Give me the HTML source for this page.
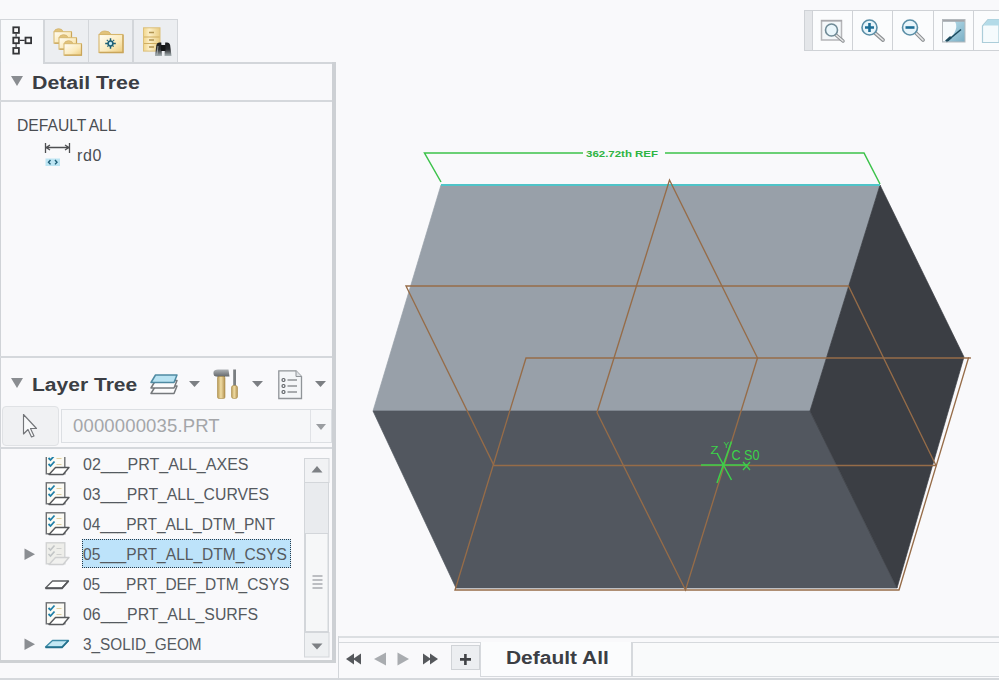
<!DOCTYPE html>
<html><head><meta charset="utf-8">
<style>
html,body{margin:0;padding:0;}
body{width:999px;height:680px;overflow:hidden;position:relative;background:#f9f9fb;font-family:"Liberation Sans",sans-serif;}
.a{position:absolute;}
.t{position:absolute;white-space:nowrap;line-height:1;}
.tab{position:absolute;top:19px;height:43px;background:#eceef1;border:1px solid #d3d6da;border-bottom:none;box-sizing:border-box;}
.hdr{font-weight:bold;color:#3b3e44;font-size:19px;}
.row{position:absolute;left:82.5px;transform-origin:0 0;font-size:16px;color:#555a60;white-space:nowrap;line-height:1;}
.arr{position:absolute;width:0;height:0;border-left:5.5px solid transparent;border-right:5.5px solid transparent;border-top:6px solid #8a8d91;}
</style></head><body>

<!-- ===== LEFT PANEL ===== -->
<!-- tabs -->
<div class="a" style="left:0;top:19px;width:44px;height:45px;background:#f8f9fb;border-top:1px solid #d3d6da;border-right:1px solid #d3d6da;border-left:1px solid #d3d6da;box-sizing:border-box;"></div>
<div class="tab" style="left:44px;width:45px;"></div>
<div class="tab" style="left:88px;width:45px;"></div>
<div class="tab" style="left:133px;width:45px;"></div>

<!-- panel frame -->
<div class="a" style="left:43px;top:62px;width:293px;height:2px;background:#d3d6da;"></div>
<div class="a" style="left:0;top:62px;width:1px;height:600px;background:#d0d3d7;"></div>
<div class="a" style="left:332px;top:62px;width:4px;height:600px;background:#cdd0d4;"></div>
<div class="a" style="left:0;top:660px;width:336px;height:3px;background:#ced1d4;"></div>
<div class="a" style="left:0;top:100px;width:332px;height:2px;background:#d5d8dc;"></div>
<div class="a" style="left:0;top:356px;width:332px;height:2px;background:#d5d8dc;"></div>
<div class="a" style="left:0;top:447px;width:332px;height:2px;background:#d5d8dc;"></div>
<div class="a" style="left:0;top:678px;width:338px;height:2px;background:#d5d8dc;"></div>

<!-- Detail tree header -->
<div class="arr" style="left:11px;top:76px;border-left-width:6px;border-right-width:6px;border-top-width:10px;"></div>
<div class="t hdr" style="left:31.5px;top:74px;font-size:18.8px;transform:scaleX(1.135);transform-origin:0 0;">Detail Tree</div>
<div class="t" style="left:16.5px;top:116.8px;font-size:16.5px;color:#4a4d52;word-spacing:-1px;transform:scaleX(0.95);transform-origin:0 0;">DEFAULT ALL</div>
<div class="t" style="left:77px;top:147.5px;font-size:16px;color:#4a4d52;letter-spacing:0.6px;">rd0</div>

<!-- Layer tree header -->
<div class="arr" style="left:11px;top:378px;border-left-width:6px;border-right-width:6px;border-top-width:10px;"></div>
<div class="t hdr" style="left:31.5px;top:376.3px;font-size:18.8px;transform:scaleX(1.12);transform-origin:0 0;">Layer Tree</div>

<!-- combo row -->
<div class="a" style="left:2px;top:406px;width:57px;height:40px;background:#f0f1f3;border:1px solid #e0e2e5;border-radius:4px;box-sizing:border-box;"></div>
<div class="a" style="left:61px;top:409px;width:271px;height:34px;background:#f6f7f9;border:1px solid #dcdfe3;box-sizing:border-box;"></div>
<div class="a" style="left:310px;top:410px;width:1px;height:32px;background:#e0e2e6;"></div>
<div class="arr" style="left:316px;top:424px;border-top-color:#9a9da1;"></div>
<div class="t" style="left:73px;top:417px;font-size:18.5px;color:#a4a6a9;letter-spacing:0.15px;">0000000035.PRT</div>

<!-- list rows -->
<div class="a" style="left:82px;top:539px;width:209px;height:29px;background:#bde3fa;border:1px dotted #2a3a48;box-sizing:border-box;"></div>
<div class="row" style="top:457.0px;transform:scaleX(1.0022);">02___PRT_ALL_AXES</div>
<div class="row" style="top:487.0px;transform:scaleX(0.9849);">03___PRT_ALL_CURVES</div>
<div class="row" style="top:517.0px;transform:scaleX(0.9696);">04___PRT_ALL_DTM_PNT</div>
<div class="row" style="top:547.0px;transform:scaleX(0.9725);">05___PRT_ALL_DTM_CSYS</div>
<div class="row" style="top:577.0px;transform:scaleX(0.9682);">05___PRT_DEF_DTM_CSYS</div>
<div class="row" style="top:607.0px;transform:scaleX(0.9907);">06___PRT_ALL_SURFS</div>
<div class="row" style="top:637.0px;transform:scaleX(0.9601);">3_SOLID_GEOM</div>

<!-- scrollbar -->
<div class="a" style="left:304px;top:458px;width:25px;height:199px;background:#e9ebee;border:1px solid #d3d6da;box-sizing:border-box;"></div>

<!-- ===== LEFT ICONS ===== -->
<svg class="a" style="left:0;top:0" width="340" height="680" viewBox="0 0 340 680">
  <defs>
    <linearGradient id="fold" x1="0" y1="0" x2="1" y2="1">
      <stop offset="0" stop-color="#fffaf0"/><stop offset="1" stop-color="#f6dc9a"/>
    </linearGradient>
    <g id="chk">
      <rect x="0.8" y="0.8" width="18.5" height="21" fill="#fbfaf4" stroke="#6e7073" stroke-width="1.4"/>
      <path d="M3,6 L5,8 L9,3.5 M3,12 L5,14 L9,9.5" stroke="#1f7fa8" stroke-width="1.8" fill="none"/>
      <path d="M11,6.5 H16 M11,12.5 H16" stroke="#e0cfa0" stroke-width="1.2"/>
      <polygon points="10,15.5 23.5,15.5 17.5,22.5 3.5,22.5" fill="#ffffff" stroke="#56585b" stroke-width="1.4" stroke-linejoin="round"/>
    </g>
  </defs>
  <!-- tab1 tree -->
  <g stroke="#343538" stroke-width="1.8" fill="#fafafa">
    <rect x="13.3" y="27.3" width="5.6" height="5.6"/>
    <rect x="13.3" y="37.6" width="5.6" height="5.6"/>
    <rect x="13.3" y="48" width="5.6" height="5.6"/>
    <rect x="25.5" y="37.6" width="5.6" height="5.6"/>
    <path d="M16.1,33.8 V36.7 M16.1,44.1 V47.1 M19.8,40.4 H24.6" stroke-width="1.2"/>
  </g>
  <!-- tab2 folders -->
  <defs>
    <linearGradient id="fold2" x1="0" y1="0" x2="1" y2="1">
      <stop offset="0" stop-color="#fffdf6"/><stop offset="0.6" stop-color="#fbeabb"/><stop offset="1" stop-color="#eccb7c"/>
    </linearGradient>
    <g id="fld">
      <path d="M0.5,4 Q1,0.5 5,0.5 Q9,0.5 9.5,3.5 Z" fill="#e2c37c" stroke="#d2b16a" stroke-width="0.8"/>
      <rect x="0.5" y="3.5" width="17.5" height="11.5" fill="url(#fold2)" stroke="#d8b86e" stroke-width="1"/>
      <path d="M18,4 V15 H1" stroke="#c9a55a" stroke-width="1.2" fill="none"/>
    </g>
  </defs>
  <use href="#fld" x="53.5" y="28.2"/>
  <use href="#fld" x="58.5" y="34.2"/>
  <use href="#fld" x="63.5" y="40.2"/>
  <!-- tab3 folder w/ snowflake -->
  <path d="M99.5,35 Q100,31 105,31 Q110,31 111,34.5 Z" fill="#e2c37c" stroke="#d2b16a" stroke-width="0.8"/>
  <rect x="99" y="34.5" width="24" height="18" fill="url(#fold2)" stroke="#d6b66c" stroke-width="1.1"/>
  <path d="M123,35 V52.5 H99.5" stroke="#c9a55a" stroke-width="1.3" fill="none"/>
  <path d="M110.5,38.2 V48.8 M105.2,43.5 H115.8" stroke="#1d5f76" stroke-width="1.5"/>
  <path d="M106.8,39.8 L114.2,47.2 M114.2,39.8 L106.8,47.2" stroke="#2a6b80" stroke-width="1.2" stroke-dasharray="1.6 1.1"/>
  <circle cx="110.5" cy="43.5" r="2.4" fill="#c6ecf5" stroke="#1d5f76" stroke-width="1.5"/>
  <!-- tab4 cabinet + binoculars -->
  <defs>
    <linearGradient id="cab" x1="0" y1="0" x2="1" y2="0"><stop offset="0" stop-color="#f1d58a"/><stop offset="0.35" stop-color="#fcefc8"/><stop offset="1" stop-color="#e9cc82"/></linearGradient>
    <linearGradient id="bino" x1="0" y1="0" x2="0" y2="1"><stop offset="0" stop-color="#1c1d1f"/><stop offset="0.5" stop-color="#2a2c2f"/><stop offset="1" stop-color="#a9b3b6"/></linearGradient>
  </defs>
  <rect x="143.5" y="27.8" width="16.5" height="23.3" fill="url(#cab)" stroke="#dcc07a" stroke-width="1"/>
  <path d="M144,37 H159.5 M144,43.5 H159.5" stroke="#cfae62" stroke-width="1.1"/>
  <path d="M149,32.5 H154 M149,40 H154 M149,47 H154" stroke="#b09352" stroke-width="1.3"/>
  <path d="M155,56 L156.3,45.5 Q156.8,42.5 159.5,42.5 H161.3 L162,56 Z" fill="url(#bino)"/>
  <path d="M171.5,56 L170.2,45.5 Q169.7,42.5 167,42.5 H165.2 L164.5,56 Z" fill="url(#bino)"/>
  <rect x="161" y="45" width="4.5" height="6" fill="#161718"/>
  <path d="M157,54.5 L158,46" stroke="#cfd8da" stroke-width="0.9" opacity="0.7"/>
  <!-- detail tree dim icon -->
  <path d="M45.5,143 V153 M69.5,143 V153 M46,147.5 H69 M46,147.5 L50,145 M46,147.5 L50,150 M69,147.5 L65,145 M69,147.5 L65,150" stroke="#4e4f52" stroke-width="1.3" fill="none"/>
  <rect x="45.5" y="158.5" width="14.5" height="7.5" fill="#bde5f3"/>
  <path d="M50.5,160 L48.5,162.2 L50.5,164.4 M55,160 L57,162.2 L55,164.4" stroke="#1f5f78" stroke-width="1.4" fill="none"/>

  <!-- layer tree toolbar -->
  <g stroke-width="1.5" fill="none">
    <polygon points="155.5,386 177,386 174,393.5 151,393.5" fill="#fbfbfc" stroke="#76797c" stroke-linejoin="round"/>
    <polygon points="155.5,380.5 177,380.5 174,388 151,388" fill="#fbfbfc" stroke="#76797c" stroke-linejoin="round"/>
    <polygon points="155.5,375 177,375 174,382.5 151,382.5" fill="#b9e3f2" stroke="#4f8aa2" stroke-linejoin="round"/>
  </g>
  <polygon points="189,381 200,381 194.5,387" fill="#7c7f83"/>
  <polygon points="252,381 263,381 257.5,387" fill="#7c7f83"/>
  <polygon points="315,381 326,381 320.5,387" fill="#7c7f83"/>
  <!-- hammer -->
  <defs><linearGradient id="hnd" x1="0" y1="0" x2="1" y2="0"><stop offset="0" stop-color="#b89a55"/><stop offset="0.45" stop-color="#f0dca4"/><stop offset="1" stop-color="#b39250"/></linearGradient>
  <linearGradient id="hed" x1="0" y1="0" x2="0" y2="1"><stop offset="0" stop-color="#aeb2b5"/><stop offset="1" stop-color="#5f6366"/></linearGradient></defs>
  <path d="M213.5,372 Q214,369.5 218,369.5 H228.5 L229.5,376.5 H225 V377 H217.5 V376.5 H216 Q213.5,376 213.5,374 Z" fill="url(#hed)"/>
  <rect x="217.5" y="376.5" width="7.5" height="22" rx="1.5" fill="url(#hnd)" stroke="#a98c48" stroke-width="0.6"/>
  <!-- screwdriver -->
  <rect x="233.2" y="369.5" width="2.8" height="17" fill="#7a7e81"/>
  <rect x="231.5" y="385.5" width="6" height="13" rx="2" fill="url(#hnd)" stroke="#a98c48" stroke-width="0.6"/>
  <!-- doc -->
  <path d="M278.8,370.8 H296 L301.5,376.5 V398.5 H278.8 Z" fill="#f4f6f8" stroke="#909498" stroke-width="1.3"/>
  <path d="M296,370.8 V376.5 H301.5" fill="#dfe3e6" stroke="#909498" stroke-width="1"/>
  <g stroke="#5d6165" stroke-width="1.2" fill="none">
    <circle cx="283.5" cy="380" r="1.5"/><circle cx="283.5" cy="386" r="1.5"/><circle cx="283.5" cy="392" r="1.5"/>
    <path d="M287.5,380 H297 M287.5,386 H297 M287.5,392 H297"/>
  </g>
  <!-- select arrow -->
  <path d="M23.5,414.5 V434 L28,429.5 L31.5,437 L34,436 L30.5,428.5 L36.5,428.5 Z" fill="#f8f9fa" stroke="#737579" stroke-width="1.15" stroke-linejoin="round"/>

  <!-- list icons -->
  <clipPath id="lc"><rect x="0" y="457" width="300" height="200"/></clipPath>
  <g clip-path="url(#lc)">
    <use href="#chk" x="45.5" y="452"/>
    <use href="#chk" x="45.5" y="482"/>
    <use href="#chk" x="45.5" y="512"/>
    <g transform="translate(45.5,542)">
      <rect x="0.8" y="0.8" width="18.5" height="21" fill="#eeeeea" stroke="#d2d3d3" stroke-width="1.4"/>
      <path d="M3,6 L5,8 L9,3.5 M3,12 L5,14 L9,9.5" stroke="#c2c5c6" stroke-width="1.6" fill="none"/>
      <path d="M11,6.5 H16 M11,12.5 H16" stroke="#cfd0ce" stroke-width="1.2"/>
      <polygon points="10,15.5 23.5,15.5 17.5,22.5 3.5,22.5" fill="#f1f1ef" stroke="#cfd0d1" stroke-width="1.4" stroke-linejoin="round"/>
    </g>
    <use href="#chk" x="45.5" y="602"/>
  </g>
  <polygon points="52.5,581 68.5,581 62,588 45.5,588" fill="#fff" stroke="#5e6063" stroke-width="1.3" stroke-linejoin="round"/><path d="M45.5,588.3 H62 L68.5,581" stroke="#55575a" stroke-width="1.8" fill="none"/>
  <polygon points="52.5,640.5 68.5,640.5 62,647 45.5,647" fill="#c3e8f4" stroke="#3d8ba6" stroke-width="1.3" stroke-linejoin="round"/><path d="M45.5,647.3 H62 L68.5,640.5" stroke="#23708c" stroke-width="1.8" fill="none"/>
  <polygon points="24.5,548.5 35,554.3 24.5,560" fill="#8b8e92"/>
  <polygon points="24.5,638.5 35,644.3 24.5,650" fill="#8b8e92"/>

  <!-- scrollbar details -->
  <rect x="304.5" y="458.5" width="24.5" height="24" fill="#f1f2f4" stroke="#d3d6da"/>
  <polygon points="311.5,472.5 322.5,472.5 317,466" fill="#7d8084"/>
  <rect x="304.5" y="632.5" width="24.5" height="24.5" fill="#eef0f2" stroke="#d3d6da"/>
  <polygon points="311.5,643.5 322.5,643.5 317,649.5" fill="#7d8084"/>
  <rect x="305.5" y="533.5" width="22.5" height="98" fill="#f6f7f8" stroke="#d3d6da"/>
  <path d="M312.5,576 H322.5 M312.5,580 H322.5 M312.5,584 H322.5 M312.5,588 H322.5" stroke="#a9acb0" stroke-width="1.3"/>
</svg>

<!-- ===== VIEWPORT ===== -->
<svg class="a" style="left:0;top:0" width="999" height="680" viewBox="0 0 999 680">
  <polygon points="441,185 880,185 810,411 373,411" fill="#98a0a9" stroke="#98a0a9" stroke-width="0.7"/>
  <polygon points="373,411 810,411 897,588 456,588" fill="#52575f" stroke="#52575f" stroke-width="0.7"/>
  <polygon points="880,185 964,357 897,588 810,411" fill="#3b3e44" stroke="#3b3e44" stroke-width="0.7"/>
  <line x1="441" y1="185" x2="880" y2="185" stroke="#4fc4c8" stroke-width="2"/>
  <g stroke="#966c48" stroke-width="1.35" fill="none">
    <polygon points="406,286 848.5,286 936,465.5 494,465.5"/>
    <polygon points="526,358 968.5,358 899,590 455,590"/><line x1="968" y1="358" x2="971" y2="358"/>
    <polygon points="669.5,180 757.5,358 685.5,590 597,412.5"/>
  </g>
  <!-- dimension -->
  <g stroke="#3cc24a" stroke-width="1.5" fill="none">
    <polyline points="583,153 424.5,153 441,182"/>
    <polyline points="665,153 864,153 880,184"/>
  </g>
  <text x="586" y="157" font-family="Liberation Sans" font-weight="bold" font-size="9.5" fill="#2fb443" textLength="72" lengthAdjust="spacingAndGlyphs">362.72th REF</text>
  <!-- csys -->
  <g stroke="#3cd24a" stroke-width="1.5" fill="none">
    <line x1="701" y1="465" x2="747" y2="465"/>
    <line x1="717" y1="483" x2="731.5" y2="441.5"/>
    <line x1="717" y1="453" x2="731.5" y2="480"/>
    <path d="M743,462 L750,470 M750,462 L743,470" stroke-width="1.2"/>
  </g>
  <text x="731.5" y="459.5" font-family="Liberation Sans" font-size="14" fill="#3cd24a" textLength="28" lengthAdjust="spacingAndGlyphs">C S0</text>
  <text x="710.5" y="453.5" font-family="Liberation Sans" font-size="10.5" fill="#3cd24a" textLength="8" lengthAdjust="spacingAndGlyphs">Z</text>
  <text x="723.5" y="448" font-family="Liberation Sans" font-size="8.5" fill="#3cd24a">Y</text>
</svg>

<!-- ===== TOP RIGHT TOOLBAR ===== -->
<div class="a" style="left:804px;top:10px;width:200px;height:41px;background:#fbfcfd;border:1px solid #cfd2d6;box-sizing:border-box;"></div>
<div class="a" style="left:805px;top:11px;width:7px;height:39px;background:#e4e6e9;border-right:1px solid #cfd2d6;"></div>
<div class="a" style="left:852px;top:11px;width:1px;height:39px;background:#cfd2d6;"></div>
<div class="a" style="left:892px;top:11px;width:1px;height:39px;background:#cfd2d6;"></div>
<div class="a" style="left:933px;top:11px;width:1px;height:39px;background:#cfd2d6;"></div>
<div class="a" style="left:973px;top:11px;width:1px;height:39px;background:#cfd2d6;"></div>
<svg class="a" style="left:800px;top:0" width="199" height="60" viewBox="800 0 199 60">
  <!-- zoom window -->
  <rect x="821.5" y="20.5" width="20" height="19.5" fill="#f4f7f9" stroke="#b5b5b8" stroke-width="1.5"/>
  <line x1="821" y1="20.8" x2="842" y2="20.8" stroke="#a8a8ab" stroke-width="1.5"/>
  <line x1="836" y1="35" x2="843" y2="41" stroke="#8d9194" stroke-width="3.5" stroke-linecap="round"/>
  <line x1="836" y1="35" x2="843" y2="41" stroke="#e8e8e8" stroke-width="1.5" stroke-linecap="round"/>
  <circle cx="831.5" cy="30" r="6" fill="#eaf6fb" stroke="#6f8a96" stroke-width="1.6"/>
  <!-- zoom in -->
  <line x1="875" y1="33" x2="883" y2="40" stroke="#8d9194" stroke-width="3.8" stroke-linecap="round"/>
  <line x1="875" y1="33" x2="883" y2="40" stroke="#e8e8e8" stroke-width="1.6" stroke-linecap="round"/>
  <circle cx="869.5" cy="27.5" r="7.5" fill="#e8f5fb" stroke="#5a8ea6" stroke-width="1.6"/>
  <path d="M865,27.5 H874 M869.5,23 V32" stroke="#1d6e96" stroke-width="2.6"/>
  <!-- zoom out -->
  <line x1="916" y1="33" x2="923" y2="40" stroke="#8d9194" stroke-width="3.8" stroke-linecap="round"/>
  <line x1="916" y1="33" x2="923" y2="40" stroke="#e8e8e8" stroke-width="1.6" stroke-linecap="round"/>
  <circle cx="910" cy="27.5" r="7.5" fill="#e8f5fb" stroke="#5a8ea6" stroke-width="1.6"/>
  <path d="M905.5,27.5 H914.5" stroke="#1d6e96" stroke-width="2.6"/>
  <!-- refit -->
  <defs><linearGradient id="rf" x1="0" y1="0" x2="1" y2="1"><stop offset="0" stop-color="#c4e6f2"/><stop offset="1" stop-color="#79aec4"/></linearGradient></defs>
  <rect x="942.5" y="19.5" width="22.5" height="22.5" fill="url(#rf)"/>
  <path d="M943,21.5 H955 C959,28 953,37 946,41.5 H943 Z" fill="#f7fbfd"/>
  <rect x="942.5" y="19.5" width="22.5" height="2.2" fill="#a4a6aa"/>
  <path d="M946.5,41.5 L961,29.5" stroke="#1c4a5e" stroke-width="1.6"/>
  <path d="M946,41.5 L951,37" stroke="#1c4a5e" stroke-width="2.6"/>
  <rect x="942.5" y="19.5" width="22.5" height="22.5" fill="none" stroke="#b4b9bd" stroke-width="1"/>
  <!-- partial last -->
  <path d="M982.5,42.5 V26 L988,19.5 H999 V42.5 Z" fill="#f5fbfd" stroke="#abcdd9" stroke-width="1.2"/>
  <path d="M983,26 L988.5,19.5 H999 V25.5 H983 Z" fill="#b3dbe8"/>
</svg>

<!-- ===== BOTTOM TAB BAR ===== -->
<div class="a" style="left:338px;top:636px;width:661px;height:2px;background:#dcdfe2;"></div>
<div class="a" style="left:338px;top:636px;width:1px;height:44px;background:#d3d6da;"></div>
<div class="a" style="left:339px;top:642px;width:142px;height:1px;background:#d6d9dd;"></div>
<div class="a" style="left:339px;top:678px;width:660px;height:2px;background:#d5d8dc;"></div>
<div class="a" style="left:451px;top:645px;width:29px;height:25px;background:#eceef1;border:1px solid #d0d3d7;box-sizing:border-box;"></div>
<svg class="a" style="left:455px;top:649px" width="20" height="20"><path d="M5,10.4 H16 M10.4,5 V16" stroke="#404246" stroke-width="2.6"/></svg>
<div class="a" style="left:480px;top:642px;width:152px;height:35px;background:#fbfcfd;border:1px solid #d6d9dd;border-top:none;box-sizing:border-box;"></div>
<div class="a" style="left:632px;top:642px;width:367px;height:35px;background:#f9fafb;border-top:1px solid #d6d9dd;border-left:1px solid #d6d9dd;border-bottom:1px solid #d6d9dd;box-sizing:border-box;"></div>
<div class="t" style="left:506px;top:649.3px;font-size:18.8px;font-weight:bold;color:#3b3e44;transform:scaleX(1.115);transform-origin:0 0;">Default All</div>
<svg class="a" style="left:340px;top:645px" width="110" height="30" viewBox="340 645 110 30">
  <polygon points="346,659 354,653.5 354,664.5" fill="#55585c"/>
  <polygon points="353,659 361,653.5 361,664.5" fill="#55585c"/>
  <polygon points="374,659 386,652.5 386,665.5" fill="#a9acb0"/>
  <polygon points="409,659 397.5,652.5 397.5,665.5" fill="#a9acb0"/>
  <polygon points="438,659 430,653.5 430,664.5" fill="#55585c"/>
  <polygon points="431,659 423,653.5 423,664.5" fill="#55585c"/>
</svg>

</body></html>
